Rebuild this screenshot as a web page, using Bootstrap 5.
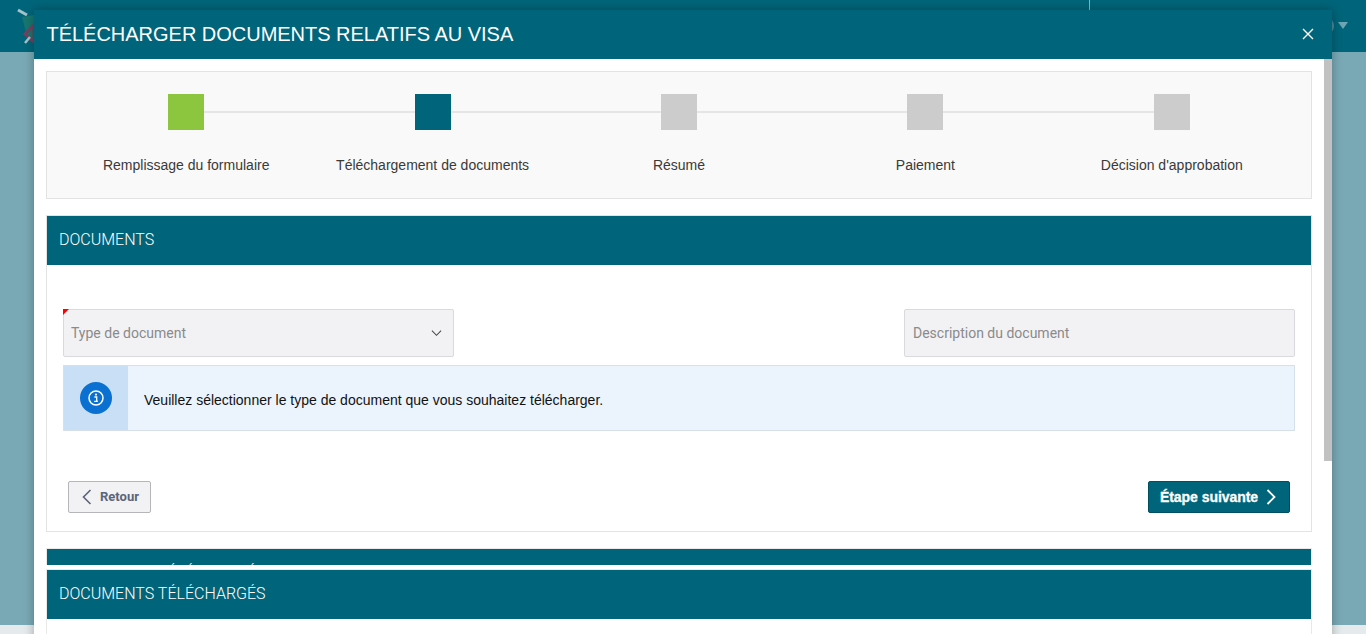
<!DOCTYPE html>
<html lang="fr">
<head>
<meta charset="utf-8">
<title>Télécharger documents relatifs au visa</title>
<link rel="stylesheet" href="https://cdn.jsdelivr.net/npm/bootstrap@5.3.0/dist/css/bootstrap.min.css">
<style>
html,body{height:100%;overflow:hidden}
body{font-family:"Liberation Sans",Arial,sans-serif;font-size:14px;color:#333;background:#7aa9b6}
.page-shell{height:634px}
.page-top{height:52px;background:#00657a;flex:none}
.page-mid{background:#7aa9b6}
.page-foot{height:9px;background:#e5eaec;flex:none}
.top-sep{width:1px;height:10px;background:#8fb4bf;margin-left:1089px}
.logo-mark{position:absolute;left:17px;top:8px}
.user-caret{position:absolute;left:1338px;top:22px;width:0;height:0;border-left:5px solid transparent;border-right:5px solid transparent;border-top:7px solid #6fa4b2}
.user-arc{position:absolute;left:1320px;top:18px;width:14px;height:16px;border-radius:50%;background:#4f8b9c}
.visa-modal{position:absolute;left:34px;top:10px;width:1298px;height:640px;background:#fff;border:0;border-radius:0;box-shadow:0 0 10px rgba(0,0,0,.3);overflow:hidden}
.visa-head{height:49px;background:#00657a;color:#fff;padding:0 12px 0 12.5px;border:0;border-radius:0;flex:none}
.visa-title{font-size:20px;line-height:49px;margin:0;font-weight:400;letter-spacing:-.02px}
.visa-close{background:none;border:0;padding:0;width:14px;height:14px;margin-right:5px;margin-bottom:2px;display:flex}
.visa-body{padding:12px 20px 0 12px;overflow:hidden}
.scroll-thumb{position:absolute;right:0;top:49px;width:8px;height:402px;background:#c1c1c1}
.step-card{height:128px;background:#f9f9f9;border:1px solid #e3e3e3;margin-bottom:16px;padding:22px 16px 0}
.step-grid{display:grid;grid-template-columns:repeat(5,1fr)}
.step-item{position:relative;text-align:center}
.step-line{position:absolute;left:50%;width:100%;top:17px;height:2px;background:#e5e5e5}
.step-box{position:relative;display:block;width:36px;height:36px;margin:0 auto 26px;background:#ccc}
.step-done{background:#8cc63f}
.step-now{background:#00657a}
.step-label{line-height:18px;color:#3a3a3a}
.doc-card{border:1px solid #e3e3e3;border-radius:0;margin-bottom:16px}
.doc-head{height:49px;line-height:47px;background:#00657a;color:#fff;font-family:Roboto,sans-serif;font-size:16px;font-weight:300;padding:0 12px;overflow:hidden}
.doc-body{padding:44px 16px 18px;height:266px}
.field-wrap{position:relative;width:391px}
.flagged::before{content:"";position:absolute;left:0;top:0;z-index:2;border-top:6px solid #f00;border-right:6px solid transparent}
.field-ctl,.field-ctl:focus{height:48px;background-color:#f2f2f5;border:1px solid #d9d9de;border-radius:2px;font-family:Roboto,sans-serif;font-size:14px;color:#8a8a8a;padding:0 8px;box-shadow:none}
.field-ctl::placeholder{color:#8a8a8a;opacity:1}
.select-ctl,.select-ctl:focus{padding-left:7px;background-image:url("data:image/svg+xml,%3csvg xmlns='http://www.w3.org/2000/svg' viewBox='0 0 12 8'%3e%3cpath fill='none' stroke='%23444' stroke-width='1.1' d='M1 1.5l5 5 5-5'/%3e%3c/svg%3e");background-position:right 11px center;background-size:11px 8px}
.info-box{height:66px;margin-top:8px;background:#ebf4fd;border:1px solid #d5e0ea;color:#111}
.info-side{width:64px;background:#c8dff6;flex:none;padding-top:16px}
.info-dot{display:flex;width:32px;height:32px;border-radius:50%;background:#0a70d1;margin:0 auto;align-items:center;justify-content:center}
.info-text{padding-left:16px;padding-top:4px}
.action-row{margin-top:50px;padding:0 5px}
.back-btn,.back-btn:hover{height:32px;width:83px;padding:0 0 0 2px;background:#f2f2f5;border:1px solid #b5b5ba;border-radius:2px;color:#5b6579;font-family:Roboto,sans-serif;font-size:13px;font-weight:700}
.next-btn,.next-btn:hover{height:32px;width:142px;padding:0 2px 0 0;background:#00657a;border:1px solid #004f60;border-radius:2px;color:#fff;font-family:"Liberation Sans",sans-serif;font-size:14px;font-weight:700;-webkit-text-stroke:.3px #fff;letter-spacing:-.05px}
.clip-card{border:1px solid #e9e9e9;border-bottom:0;height:17px;overflow:hidden;margin-bottom:4px}
.clip-card .doc-head{height:16px;overflow:hidden}
.clip-inner{height:49px}
.up-card{border:1px solid #e9e9e9;height:90px}
</style>
</head>
<body>
<div class="page-shell d-flex flex-column position-relative">
  <div class="page-top">
    <div class="top-sep"></div>
    <svg class="logo-mark" width="32" height="38" viewBox="0 0 32 38" aria-hidden="true">
      <path d="M1 2 L10 7" stroke="#a6c2ca" stroke-width="3" fill="none"/>
      <path d="M5 9 L17 7 L17 32 L10 28Z" fill="#17776f"/>
      <path d="M8 26 L17 17 L17 34Z" fill="none" stroke="#7a3f5e" stroke-width="3"/>
      <path d="M8 35 L13 29" stroke="#a6c2ca" stroke-width="2.5" fill="none"/>
    </svg>
    <span class="user-arc"></span>
    <span class="user-caret"></span>
  </div>
  <div class="page-mid flex-grow-1"></div>
  <div class="page-foot"></div>

  <div class="visa-modal modal-content d-flex flex-column">
    <div class="visa-head d-flex align-items-center justify-content-between">
      <h1 class="visa-title">TÉLÉCHARGER DOCUMENTS RELATIFS AU VISA</h1>
      <button class="visa-close" type="button" aria-label="Fermer">
        <svg width="14" height="14" viewBox="0 0 14 14"><path d="M2 2 L12 12 M12 2 L2 12" stroke="#fff" stroke-width="1.4" fill="none"/></svg>
      </button>
    </div>
    <div class="visa-body flex-grow-1">
      <div class="step-card">
        <div class="step-grid">
          <div class="step-item"><span class="step-line"></span><span class="step-box step-done"></span><div class="step-label">Remplissage du formulaire</div></div>
          <div class="step-item"><span class="step-line"></span><span class="step-box step-now"></span><div class="step-label">Téléchargement de documents</div></div>
          <div class="step-item"><span class="step-line"></span><span class="step-box"></span><div class="step-label">Résumé</div></div>
          <div class="step-item"><span class="step-line"></span><span class="step-box"></span><div class="step-label">Paiement</div></div>
          <div class="step-item"><span class="step-box"></span><div class="step-label">Décision d'approbation</div></div>
        </div>
      </div>

      <div class="doc-card">
        <div class="doc-head">DOCUMENTS</div>
        <div class="doc-body">
          <div class="d-flex justify-content-between">
            <div class="field-wrap flagged">
              <select class="form-select field-ctl select-ctl" aria-label="Type de document"><option>Type de document</option></select>
            </div>
            <div class="field-wrap">
              <input class="form-control field-ctl" type="text" placeholder="Description du document">
            </div>
          </div>
          <div class="info-box d-flex">
            <div class="info-side">
              <span class="info-dot">
                <svg width="18" height="18" viewBox="0 0 18 18"><circle cx="9" cy="9" r="7" fill="none" stroke="#fff" stroke-width="1.5"/><circle cx="9" cy="5.6" r="1.1" fill="#fff"/><path d="M7.4 8h2.3v4.2h1.1M7.2 12.4h3.6" stroke="#fff" stroke-width="1.3" fill="none"/></svg>
              </span>
            </div>
            <div class="info-text d-flex align-items-center">Veuillez sélectionner le type de document que vous souhaitez télécharger.</div>
          </div>
          <div class="action-row d-flex justify-content-between">
            <button class="back-btn btn d-flex align-items-center justify-content-center gap-2" type="button">
              <svg width="10" height="16" viewBox="0 0 10 16"><path d="M8.5 1 L1.5 8 L8.5 15" stroke="#5b6579" stroke-width="1.6" fill="none"/></svg>Retour
            </button>
            <button class="next-btn btn d-flex align-items-center justify-content-center gap-2" type="button">Étape suivante
              <svg width="10" height="16" viewBox="0 0 10 16"><path d="M1.5 1 L8.5 8 L1.5 15" stroke="#fff" stroke-width="1.8" fill="none"/></svg>
            </button>
          </div>
        </div>
      </div>

      <div class="clip-card"><div class="doc-head"><div class="clip-inner">DOCUMENTS TÉLÉCHARGÉS</div></div></div>
      <div class="up-card"><div class="doc-head">DOCUMENTS TÉLÉCHARGÉS</div></div>
    </div>
    <div class="scroll-thumb"></div>
  </div>
</div>
<script src="https://cdn.jsdelivr.net/npm/bootstrap@5.3.0/dist/js/bootstrap.bundle.min.js"></script>
</body>
</html>
